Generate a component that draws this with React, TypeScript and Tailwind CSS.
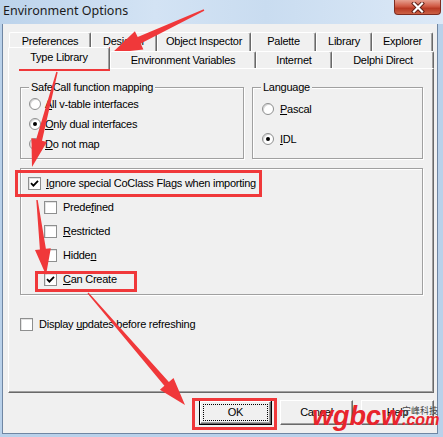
import React from 'react';

const RED = '#f0383a';

type Pt = [number, number];

// polygon for an annotation arrow that tapers from a thin tail to a wide head
function arrowPoints(tail: Pt, tip: Pt, head = 26, headW = 9, shaftW = 3, tailW = 0.8) {
  const [x1, y1] = tail;
  const [x2, y2] = tip;
  const len = Math.hypot(x2 - x1, y2 - y1);
  const ux = (x2 - x1) / len;
  const uy = (y2 - y1) / len;
  const px = -uy;
  const py = ux;
  const bx = x2 - ux * head;
  const by = y2 - uy * head;
  const pts: Pt[] = [
    [x1 + px * tailW, y1 + py * tailW],
    [bx + px * shaftW, by + py * shaftW],
    [bx + px * headW, by + py * headW],
    [x2, y2],
    [bx - px * headW, by - py * headW],
    [bx - px * shaftW, by - py * shaftW],
    [x1 - px * tailW, y1 - py * tailW],
  ];
  return pts.map((p) => `${p[0].toFixed(1)},${p[1].toFixed(1)}`).join(' ');
}

function U({ children }: { children: React.ReactNode }) {
  return <span className="underline">{children}</span>;
}

function Check({ checked }: { checked?: boolean }) {
  return (
    <span className="flex h-[13px] w-[13px] shrink-0 items-center justify-center border border-[#8e8f8f] bg-white shadow-[inset_1px_1px_0_#e3e3e3]">
      {checked && (
        <svg width="9" height="9" viewBox="0 0 9 9">
          <path d="M1 4.2 L3.4 6.6 L8 1.8" fill="none" stroke="#000" strokeWidth="1.8" />
        </svg>
      )}
    </span>
  );
}

function Radio({ checked }: { checked?: boolean }) {
  return (
    <span className="flex h-[12px] w-[12px] shrink-0 items-center justify-center rounded-full border border-[#8e8f8f] bg-white shadow-[inset_1px_1px_0_#d6d6d6]">
      {checked && <span className="h-[4px] w-[4px] rounded-full bg-black" />}
    </span>
  );
}

const backTabs = [
  { label: 'Preferences', w: 'w-[82px]' },
  { label: 'Designer', w: 'w-[66px]' },
  { label: 'Object Inspector', w: 'w-[94px]' },
  { label: 'Palette', w: 'w-[65px]' },
  { label: 'Library', w: 'w-[56px]' },
  { label: 'Explorer', w: 'w-[61px]' },
];

const frontTabs = [
  { label: 'Type Library', w: 'w-[102px]', active: true },
  { label: 'Environment Variables', w: 'w-[146px]' },
  { label: 'Internet', w: 'w-[76px]' },
  { label: 'Delphi Direct', w: 'w-[102px]' },
];

function Tab({ label, w, active, tall }: { label: string; w: string; active?: boolean; tall?: boolean }) {
  return (
    <div
      className={`flex shrink-0 items-center justify-center rounded-t-[2px] border-l border-t border-r border-l-white border-t-white border-r-[#696969] bg-[#f0f0f0] shadow-[inset_-1px_0_0_#a0a0a0] ${w} ${
        active ? 'relative z-10 -mb-[1px] h-[22px] pb-[2px]' : tall ? 'h-[19px] pb-[1px]' : 'h-[17px]'
      }`}
    >
      {label}
    </div>
  );
}

function Button({ children, isDefault }: { children: React.ReactNode; isDefault?: boolean }) {
  if (isDefault) {
    return (
      <div className="h-[25px] w-[73px] border border-black">
        <div className="flex h-full w-full items-center justify-center border border-t-white border-l-white border-r-[#696969] border-b-[#696969] bg-[#f0f0f0] p-[2px] shadow-[inset_-1px_-1px_0_#a0a0a0]">
          <div className="flex h-full w-full items-center justify-center border border-dotted border-black">{children}</div>
        </div>
      </div>
    );
  }
  return (
    <div className="flex h-[25px] w-[73px] items-center justify-center border border-t-white border-l-white border-r-[#696969] border-b-[#696969] bg-[#f0f0f0] shadow-[inset_-1px_-1px_0_#a0a0a0]">
      {children}
    </div>
  );
}

const groove = 'border border-[#a0a0a0] shadow-[inset_1px_1px_0_#fff,1px_1px_0_#fff]';

export default function App() {
  return (
    <div className="relative flex h-[437px] w-[443px] flex-col overflow-hidden bg-[#b9d1ea] font-['Liberation_Sans',Arial,sans-serif] text-[11px] leading-[13px] tracking-[-0.25px] text-black">
      {/* title bar */}
      <div className="flex h-[24px] shrink-0 items-start justify-between bg-[linear-gradient(90deg,#bcd3eb,#d3e3f4_35%,#c9dcf0_60%,#dce9f7)]">
        <span className="pl-[3px] pt-[2px] font-['Noto_Sans',sans-serif] text-[12.5px] leading-[17px] tracking-normal text-[#1b1b1b]">Environment Options</span>
        <div className="mr-[2px] flex h-[15px] w-[47px] items-center justify-center rounded-b-[4px] border border-t-0 border-[#7e2c20] bg-[linear-gradient(180deg,#e6a090,#d05a44_45%,#b83a24_60%,#cc6246)]">
          <svg width="14" height="11" viewBox="0 0 14 11">
            <path d="M3 1.5 L11 9.5 M11 1.5 L3 9.5" stroke="#5a1d14" strokeWidth="4" strokeLinecap="square" />
            <path d="M3 1.5 L11 9.5 M11 1.5 L3 9.5" stroke="#fff" strokeWidth="2.2" strokeLinecap="square" />
          </svg>
        </div>
      </div>

      {/* client area */}
      <div className="mb-[3px] ml-[2px] mr-[5px] flex flex-1 flex-col border-x border-b border-[#6f86a3] bg-[#f0f0f0]">
        {/* back tab row */}
        <div className="flex pl-[6px] pt-[8px]">
          {backTabs.map((t) => (
            <Tab key={t.label} label={t.label} w={t.w} tall />
          ))}
        </div>
        {/* front tab row */}
        <div className="relative z-10 -mt-[4px] flex h-[21px] items-end pl-[5px]">
          {frontTabs.map((t) => (
            <Tab key={t.label} label={t.label} w={t.w} active={t.active} />
          ))}
        </div>

        {/* page */}
        <div className="ml-[5px] flex h-[325px] w-[426px] flex-col border border-t-white border-l-white border-r-[#696969] border-b-[#696969] shadow-[inset_-1px_-1px_0_#a0a0a0]">
          <div className="flex pl-[11px] pt-[12px]">
            <fieldset className={`w-[224px] pb-[4px] ${groove}`}>
              <legend className="ml-[8px] bg-[#f0f0f0] px-[2px] leading-[13px]">SafeCall function mapping</legend>
              <div className="flex flex-col pl-[8px]">
                <label className="flex h-[20px] items-center gap-[4px]">
                  <Radio />
                  <span>
                    <U>A</U>ll v-table interfaces
                  </span>
                </label>
                <label className="flex h-[20px] items-center gap-[4px]">
                  <Radio checked />
                  <span>
                    <U>O</U>nly dual interfaces
                  </span>
                </label>
                <label className="flex h-[20px] items-center gap-[4px]">
                  <Radio />
                  <span>
                    <U>D</U>o not map
                  </span>
                </label>
              </div>
            </fieldset>
            <fieldset className={`ml-[8px] w-[171px] pb-[4px] ${groove}`}>
              <legend className="ml-[8px] bg-[#f0f0f0] px-[2px] leading-[13px]">Language</legend>
              <div className="flex flex-col pl-[9px]">
                <label className="flex h-[30px] items-center gap-[6px]">
                  <Radio />
                  <span>
                    <U>P</U>ascal
                  </span>
                </label>
                <label className="flex h-[30px] items-center gap-[6px]">
                  <Radio checked />
                  <span>
                    <U>I</U>DL
                  </span>
                </label>
              </div>
            </fieldset>
          </div>

          <div className={`ml-[11px] mt-[9px] flex h-[127px] w-[403px] flex-col pt-[2px] ${groove}`}>
            <label className="flex h-[24px] items-center gap-[5px] pl-[7px]">
              <Check checked />
              <span>
                <U>I</U>gnore special CoClass Flags when importing
              </span>
            </label>
            <label className="flex h-[24px] items-center gap-[6px] pl-[23px]">
              <Check />
              <span>
                Prede<U>f</U>ined
              </span>
            </label>
            <label className="flex h-[24px] items-center gap-[6px] pl-[23px]">
              <Check />
              <span>
                <U>R</U>estricted
              </span>
            </label>
            <label className="flex h-[24px] items-center gap-[6px] pl-[23px]">
              <Check />
              <span>
                Hidde<U>n</U>
              </span>
            </label>
            <label className="flex h-[24px] items-center gap-[6px] pl-[23px]">
              <Check checked />
              <span>
                <U>C</U>an Create
              </span>
            </label>
          </div>

          <label className="mt-[17px] flex h-[24px] items-center gap-[6px] pl-[11px]">
            <Check />
            <span>
              Display <U>u</U>pdates before refreshing
            </span>
          </label>
        </div>

        {/* buttons */}
        <div className="mt-[7px] flex justify-end gap-[8px] pr-[3px]">
          <Button isDefault>OK</Button>
          <Button>Cancel</Button>
          <Button>Help</Button>
        </div>
      </div>

      {/* annotation overlay */}
      <svg className="pointer-events-none absolute inset-0" width="443" height="437" viewBox="0 0 443 437">
        <g fill="none" stroke={RED} strokeWidth="3">
          <rect x="20.5" y="48.5" width="88" height="21" />
          <rect x="16.5" y="171.5" width="244" height="24" />
          <rect x="36.5" y="272.5" width="99" height="18" />
          <rect x="193.5" y="399.5" width="82" height="29" />
        </g>
        <g fill={RED}>
          <polygon points={arrowPoints([204, 10], [112, 53], 30, 10, 3.5, 0.8)} />
          <polygon points={arrowPoints([57, 72], [32, 167], 28, 8, 3, 0.7)} />
          <polygon points={arrowPoints([37, 200], [46, 275], 26, 8, 3, 0.7)} />
          <polygon points={arrowPoints([88, 293], [185, 405], 28, 9, 3, 0.7)} />
        </g>
      </svg>

      {/* watermark */}
      <div className="pointer-events-none absolute left-[312px] top-[400px] flex items-baseline font-['Liberation_Sans',Arial,sans-serif] font-bold italic tracking-normal text-[#e8242c]">
        <span className="text-[27px] leading-[32px]">wgbcw</span>
        <span className="text-[16px] leading-[20px]">.com</span>
      </div>
      <span className="pointer-events-none absolute left-[402px] top-[405px] font-['Noto_Sans_CJK_SC',sans-serif] text-[9px] leading-[12px] tracking-normal text-[#444]">宁峰科技</span>
    </div>
  );
}
